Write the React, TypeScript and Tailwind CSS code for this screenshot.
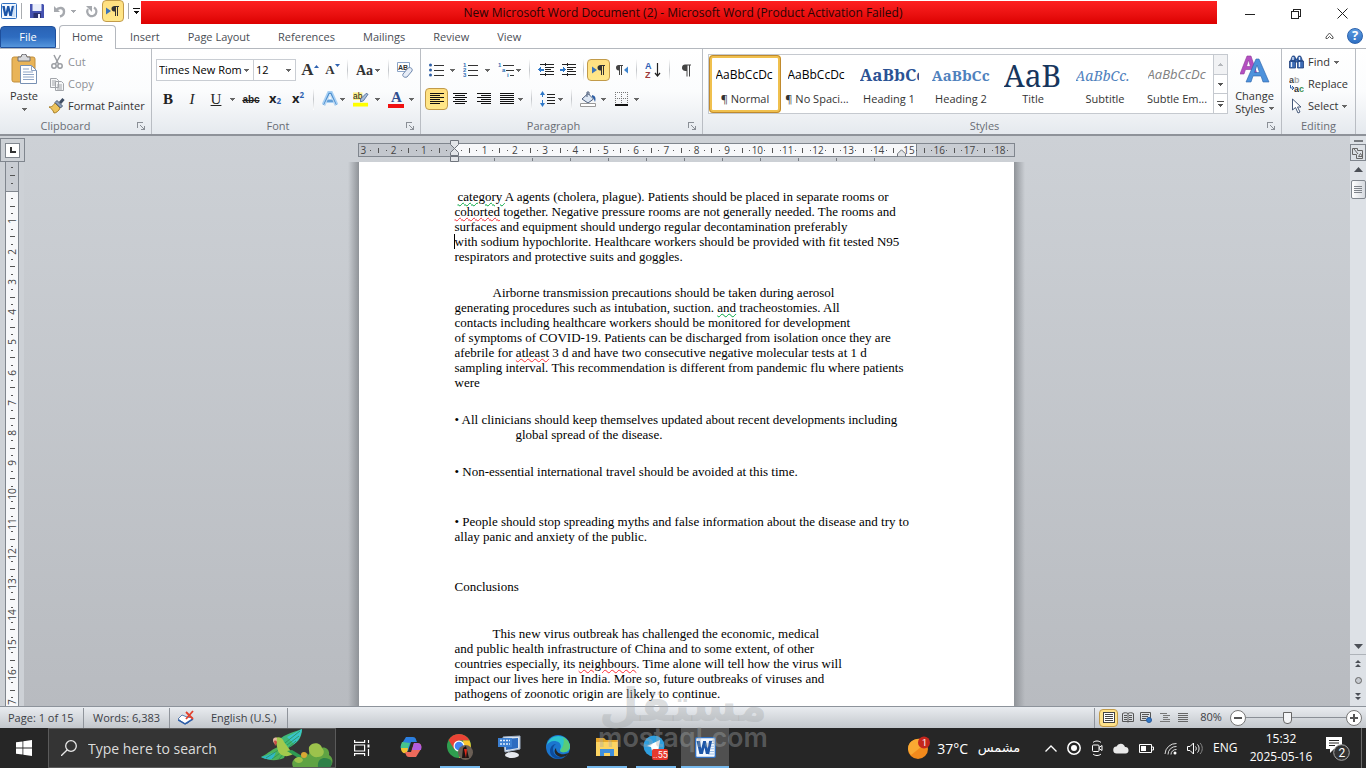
import React from 'react';

const Arrow = ({ className = 'text-[#666]' }: { className?: string }) => (
    <svg width="5" height="3" viewBox="0 0 5 3" shapeRendering="crispEdges" className={`shrink-0 ${className}`}>
        <path d="M0 0h5v1h-1v1h-1v1h-1v-1h-1v-1h-1z" fill="currentColor" />
    </svg>
);

const Sep = ({ className = '' }: { className?: string }) => (
    <span className={`h-[22px] w-px shrink-0 bg-gradient-to-b from-white via-[#c3c6ca] to-white ${className}`} />
);

interface ToolProps {
    label: string;
    className: string;
    active?: boolean;
    children: React.ReactNode;
}

const Tool: React.FC<ToolProps> = ({ label, className, active, children }) => (
    <button
        aria-label={label}
        className={`flex h-[22px] shrink-0 items-center justify-center rounded-sm ${className} ${active ? 'border border-[#c29b4a] bg-gradient-to-b from-[#ffdf80] to-[#ffe88a]' : ''}`}
    >
        {children}
    </button>
);

const Launcher = () => (
    <button aria-label="More options" className="flex w-5 items-center justify-center text-[#8a8f96]">
        <svg width="8" height="8" viewBox="0 0 8 8" fill="none" stroke="currentColor" shapeRendering="crispEdges">
            <path d="M.5 6V.5H6M3 3l4 4M7.5 3.5v4h-4" />
        </svg>
    </button>
);

interface GroupProps {
    title: string;
    className: string;
    launcher?: boolean;
    children: React.ReactNode;
}

const Group: React.FC<GroupProps> = ({ title, className, launcher = true, children }) => (
    <section className={`flex flex-col border-r border-[#b9bdc3] ${className}`}>
        <div className="flex-1">{children}</div>
        <div className="flex h-4 items-center text-[#696d75]">
            <span className="flex-1 text-center">{title}</span>
            {launcher && <Launcher />}
        </div>
    </section>
);

const WordLogo = ({ size }: { size: number }) => (
    <svg width={size} height={size} viewBox="0 0 16 16">
        <rect x=".5" y=".5" width="15" height="15" rx="1" fill="#f4f9ff" stroke="#2f6fc0" />
        <path d="M11 3h3.500M11.500 5h3M12 7h2.500M12 9h2.500M11 11h3.500M10 13h4.500" stroke="#9cc0ea" strokeWidth=".8" />
        <path d="M1.200 3h2.600l1 6 1.400-6h2.100l1.300 6 1.100-6h2.300l-2.200 10H8.300L7.200 8 6 13H3.400z" fill="#1d56a8" />
    </svg>
);

const LtrMark = () => (
    <svg width="14" height="12" viewBox="0 0 14 12">
        <path d="M0 2.500v7L5 6z" fill="#3c74b8" />
        <path d="M8.500 1H13v1h-1v9h-1V2h-1v9H9V6.500C6 6.500 5.500 4.500 5.500 3.700 5.500 2 6.800 1 8.500 1z" fill="#333" />
    </svg>
);

const RtlMark = () => (
    <svg width="14" height="12" viewBox="0 0 14 12">
        <path d="M13 2.500v7L9 6z" fill="#3c84cf" />
        <path d="M3.500 1H8v1H7v9H6V2H5v9H4V6.500C1.500 6.500 1 4.500 1 3.700 1 2 2 1 3.500 1z" fill="#444" />
    </svg>
);

const Lines = ({ d }: { d: string }) => (
    <svg width="16" height="14" viewBox="0 0 16 14" shapeRendering="crispEdges">
        <path d={d} stroke="#111" fill="none" />
    </svg>
);

const Undo = () => (
    <svg width="13" height="13" viewBox="0 0 13 13" fill="none" stroke="#a6a9ae" strokeWidth="2.400">
        <path d="M3 5.500C6 1.500 11 2.500 11 6.500c0 3-2 4.500-4 5" />
        <path d="M1 1v6h6z" fill="#a6a9ae" stroke="none" />
    </svg>
);

const Redo = () => (
    <svg width="13" height="13" viewBox="0 0 13 13" fill="none" stroke="#a6a9ae" strokeWidth="2.200">
        <path d="M9 2.500a4.600 4.600 0 1 1-6 1.500" />
        <path d="M1 1h6v6z" fill="#a6a9ae" stroke="none" />
    </svg>
);

const TitleBar = () => (
    <header className="flex h-[25px] shrink-0 items-start bg-white">
        <div className="flex h-[22px] w-[141px] shrink-0 items-center pl-px">
            <WordLogo size={16} />
            <span className="ml-1 h-4 w-px bg-[#a9acb0]" />
            <button aria-label="Save" className="ml-2">
                <svg width="14" height="14" viewBox="0 0 14 14">
                    <path d="M0 0h13l1 1v13H0z" fill="#4552b0" />
                    <path d="M2.500 0h9v7h-9z" fill="#e9eefa" />
                    <path d="M3.500 9h7.500v5H3.500z" fill="#2a3170" />
                    <path d="M8 10h2v4H8z" fill="#eef" />
                </svg>
            </button>
            <button aria-label="Undo" className="ml-[9px]"><Undo /></button>
            <Arrow className="ml-[5px] text-[#a6a9ae]" />
            <button aria-label="Redo" className="ml-[9px]"><Redo /></button>
            <Tool label="Left-to-right" className="ml-1 w-[22px]" active><LtrMark /></Tool>
            <span className="ml-1 h-4 w-px bg-[#a9acb0]" />
            <button aria-label="Customize Quick Access Toolbar" className="ml-1">
                <svg width="7" height="6" viewBox="0 0 7 6" shapeRendering="crispEdges">
                    <path d="M0 0h7v1H0zM0 3h7L3.500 6z" fill="#111" />
                </svg>
            </button>
        </div>
        <h1 className="mt-px mr-[10px] flex h-[23px] flex-1 items-center justify-center bg-gradient-to-b from-[#fe2020] to-[#dc0000] pl-2 text-[12px] whitespace-pre text-[#2a0505]">
            New Microsoft Word Document (2) - Microsoft Word (Product Activation Failed)
        </h1>
        <div className="flex h-[25px] w-[139px] items-center text-[#222]">
            <button aria-label="Minimize" className="flex w-[46px] justify-center">
                <svg width="10" height="10" stroke="currentColor" shapeRendering="crispEdges"><path d="M0 6.500h10" /></svg>
            </button>
            <button aria-label="Restore" className="flex w-[46px] justify-center pt-[2px]">
                <svg width="10" height="10" fill="none" stroke="currentColor" shapeRendering="crispEdges"><path d="M.5 2.500h7v7h-7zM2.500 2.500v-2h7v7h-2" /></svg>
            </button>
            <button aria-label="Close" className="flex w-[46px] justify-center pt-[2px]">
                <svg width="11" height="11" stroke="currentColor"><path d="M.5.5l10 10M10.500.5l-10 10" /></svg>
            </button>
        </div>
    </header>
);

const TABS = ['Insert', 'Page Layout', 'References', 'Mailings', 'Review', 'View'];

const Tabs = () => (
    <nav className="flex h-6 shrink-0 items-end border-b border-[#b4b8be] bg-white text-[11px] text-[#4a4e55]">
        <button className="h-[22px] w-14 rounded-t-sm border border-[#1e4f9c] bg-gradient-to-b from-[#2a63b5] via-[#2e6cc0] to-[#5596dc] text-white">File</button>
        <button className="relative -mb-px ml-[3px] h-6 w-[57px] rounded-t border border-b-0 border-[#b4b8be] bg-white">Home</button>
        <div className="flex h-[22px] flex-1 items-center">
            {TABS.map(tab => <button key={tab} className="px-[14px] whitespace-nowrap">{tab}</button>)}
        </div>
        <div className="flex h-6 items-center gap-[13px] pr-[3px]">
            <button aria-label="Minimize the Ribbon">
                <svg width="9" height="8" viewBox="0 0 9 8" fill="none" stroke="#555"><path d="M1 5L4.500 1l3.500 4v1.500H6.500L4.500 4.500l-2 2H1z" /></svg>
            </button>
            <button aria-label="Help" className="flex size-4 items-center justify-center rounded-full border border-[#2c62ad] bg-gradient-to-b from-[#5b9be0] to-[#2f70c4] text-[13px] font-bold text-white">?</button>
        </div>
    </nav>
);

const Clipboard = () => (
    <Group title="Clipboard" className="w-[152px] shrink-0">
        <div className="flex">
            <button className="flex w-12 flex-col items-center pt-[5px]">
                <svg width="28" height="30" viewBox="0 0 28 30">
                    <rect x="2" y="3" width="23" height="25" rx="2" fill="#e9b458" stroke="#c18f3d" />
                    <path d="M8 3h3a3 3 0 0 1 6 0h3v4H8z" fill="#d8d9dc" stroke="#6f6f73" />
                    <path d="M10.500 11.500h11l5 5v13h-16z" fill="#fff" stroke="#7790b3" />
                    <path d="M21.500 11.500v5h5M13 15h6M13 18h10M13 20.500h11M13 23h11M13 25.500h11" fill="none" stroke="#8fa5c6" />
                </svg>
                <span className="leading-6 text-[#333]">Paste</span>
                <Arrow />
            </button>
            <div className="flex flex-col pt-[2px] pl-px text-[#8d9096]">
                <button className="flex h-[22px] items-center gap-[3px]">
                    <svg width="16" height="16" viewBox="0 0 16 16" fill="none" stroke="#9a9da2" strokeWidth="1.500">
                        <path d="M5 1l4.500 9M11.500 1L6.500 10" /><circle cx="5" cy="12" r="2.200" /><circle cx="11" cy="12" r="2.200" />
                    </svg>
                    Cut
                </button>
                <button className="flex h-[22px] items-center gap-[3px]">
                    <svg width="16" height="16" viewBox="0 0 16 16" fill="#f6f7f8" stroke="#a2a5aa">
                        <path d="M1.500 2.500h6l2 2v7h-8zM6.500 5.500h6l2 2v7h-8z" /><path d="M8 9h5M8 11h5M8 13h5M3 5h4M3 7h3M3 9h3" />
                    </svg>
                    Copy
                </button>
                <button className="flex h-[22px] items-center gap-[3px] whitespace-nowrap text-[#333]">
                    <svg width="16" height="16" viewBox="0 0 16 16">
                        <path d="M0 9c4 0 5-3 6-4l5 5c-1 3-4 5-6 5-1-3-3-5-5-6z" fill="#ecc35c" stroke="#a97f28" />
                        <path d="M6 4.500l5.500 5.500 2-2-5.500-5.500z" fill="#8ba0bd" stroke="#46566f" />
                        <path d="M11 5l3.500-4" stroke="#3f4d63" strokeWidth="3" />
                    </svg>
                    Format Painter
                </button>
            </div>
        </div>
    </Group>
);

const Combo = ({ label, value, className }: { label: string; value: string; className: string }) => (
    <span className={`flex h-[22px] items-center border border-[#c9cdd3] bg-white ${className}`}>
        <select aria-label={label} className="min-w-0 flex-1 appearance-none pl-[2px] text-[11px] whitespace-nowrap text-black">
            <option>{value}</option>
        </select>
        <Arrow className="mr-1 text-[#666]" />
    </span>
);

const FontGroup = () => (
    <Group title="Font" className="w-[269px] shrink-0 pl-1">
        <div className="flex items-center pt-[10px]">
            <Combo label="Font" value="Times New Rom" className="w-[98px]" />
            <Combo label="Font size" value="12" className="-ml-px w-[43px]" />
            <Tool label="Grow font" className="ml-[2px] w-6 font-['Liberation_Serif',serif] text-[17px] font-bold text-[#333]">
                A<svg width="5" height="10"><path d="M0 3h5L2.500 0z" fill="#2f62b0" /></svg>
            </Tool>
            <Tool label="Shrink font" className="w-[21px] font-['Liberation_Serif',serif] text-[13px] font-bold text-[#333]">
                A<svg width="5" height="12"><path d="M0 0h5L2.500 3z" fill="#2f62b0" /></svg>
            </Tool>
            <Sep className="ml-1" />
            <Tool label="Change case" className="ml-2 w-6 gap-[2px] font-['Liberation_Serif',serif] text-[14px] font-bold text-[#333]">Aa<Arrow /></Tool>
            <Sep className="ml-2" />
            <Tool label="Clear formatting" className="ml-1 w-6">
                <svg width="16" height="16" viewBox="0 0 16 16">
                    <path d="M.5.5h12v9H.5z" fill="#fff" stroke="#8ba4c7" />
                    <text x="1" y="8" fontSize="7" fontWeight="bold" fontFamily="Liberation Sans" fill="#333">AB</text>
                    <path d="M6 12l5-6c2-1 5 0 4 3l-5 6c-3 1-5-1-4-3z" fill="#e7edf7" stroke="#6d87ad" />
                </svg>
            </Tool>
        </div>
        <div className="flex items-center pt-[7px] font-['Liberation_Serif',serif] text-[15px] text-[#222]">
            <Tool label="Bold" className="w-6 font-bold">B</Tool>
            <Tool label="Italic" className="w-6 italic">I</Tool>
            <Tool label="Underline" className="w-6 underline">U</Tool>
            <Arrow className="ml-[2px] text-[#666]" />
            <Tool label="Strikethrough" className="ml-1 w-6 font-['Liberation_Sans',sans-serif] text-[10px] font-bold line-through">abc</Tool>
            <Tool label="Subscript" className="w-6 font-['Open_Sans',sans-serif] text-[13px] font-bold">x<sub className="text-[8px] text-[#2f62b0]">2</sub></Tool>
            <Tool label="Superscript" className="w-[22px] font-['Open_Sans',sans-serif] text-[13px] font-bold">x<sup className="text-[8px] text-[#2f62b0]">2</sup></Tool>
            <Sep className="ml-1" />
            <Tool label="Text effects" className="ml-2 w-4">
                <svg width="16" height="16" viewBox="0 0 16 16" fill="none">
                    <path d="M1.500 14L7 2h2l5.500 12M4 10h8" stroke="#a9d0f3" strokeWidth="4" /><path d="M2 14L7.200 2.500h1.600L14 14M4.500 10h7" stroke="#4b8fd0" strokeWidth="1.600" /><path d="M2.500 14L8 3l5.500 11" stroke="#fff" strokeWidth=".7" />
                </svg>
            </Tool>
            <Arrow className="ml-[2px] text-[#666]" />
            <Tool label="Highlight" className="ml-2 w-4">
                <svg width="17" height="16" viewBox="0 0 17 16">
                    <path d="M0 1h10v8H0z" fill="#fdf18a" /><text x="0" y="8" fontSize="9" fontFamily="Liberation Sans" fill="#222">ab</text>
                    <path d="M8 8l6-6 2 1-5 7-3 1z" fill="#a9bdd8" stroke="#3e5f92" strokeWidth=".8" />
                    <path d="M0 12h16v4H0z" fill="#ffff00" />
                </svg>
            </Tool>
            <Arrow className="ml-[6px] text-[#666]" />
            <Tool label="Font color" className="ml-2 w-4">
                <svg width="16" height="17" viewBox="0 0 16 17">
                    <text x="3" y="11" fontSize="15" fontWeight="bold" fontFamily="Liberation Serif" fill="#2f4f8f">A</text>
                    <path d="M0 13h16v4H0z" fill="#f01010" />
                </svg>
            </Tool>
            <Arrow className="ml-[5px] text-[#666]" />
        </div>
    </Group>
);

const IndentIcon = ({ arrow }: { arrow: string }) => (
    <svg width="16" height="14" viewBox="0 0 16 14" shapeRendering="crispEdges">
        <path d="M2 1.500h14M7 4.500h9M7 6.500h6M7 8.500h9M2 11.500h14" stroke="#222" />
        <path d="M7.500 0v14" stroke="#222" strokeDasharray="1 1" />
        <path d={arrow} fill="#2f78c8" />
    </svg>
);

const ParagraphGroup = () => (
    <Group title="Paragraph" className="w-[282px] shrink-0 pl-1">
        <div className="flex items-center pt-[10px]">
            <Tool label="Bullets" className="ml-1 w-4">
                <svg width="16" height="14" viewBox="0 0 16 14">
                    <path d="M5 2.500h10M5 7.500h10M5 12.500h10" stroke="#333" shapeRendering="crispEdges" />
                    <g fill="#2e5fa5"><circle cx="1.500" cy="2" r="1.500" /><circle cx="1.500" cy="7" r="1.500" /><circle cx="1.500" cy="12" r="1.500" /></g>
                </svg>
            </Tool>
            <Arrow className="ml-[5px] text-[#666]" />
            <Tool label="Numbering" className="ml-2 w-4">
                <svg width="16" height="15" viewBox="0 0 16 15">
                    <path d="M5 2.500h10M5 7.500h10M5 12.500h10" stroke="#333" shapeRendering="crispEdges" />
                    <g fill="#2e6fb5" fontSize="6" fontWeight="bold" fontFamily="Liberation Sans"><text x="0" y="4">1</text><text x="0" y="9">2</text><text x="0" y="14">3</text></g>
                </svg>
            </Tool>
            <Arrow className="ml-[6px] text-[#666]" />
            <Tool label="Multilevel list" className="ml-2 w-4">
                <svg width="16" height="15" viewBox="0 0 16 15">
                    <path d="M5 2.500h11M8 7.500h8M12 12.500h4" stroke="#333" shapeRendering="crispEdges" />
                    <g fill="#2e6fb5" fontSize="6" fontWeight="bold" fontFamily="Liberation Sans"><text x="0" y="4">1</text><text x="4" y="9">a</text><text x="9" y="14">i</text></g>
                </svg>
            </Tool>
            <Arrow className="ml-[2px] text-[#666]" />
            <Sep className="ml-2" />
            <Tool label="Decrease indent" className="ml-2 w-4"><IndentIcon arrow="M0 6.500L3 3.500V5.500H6V7.500H3V9.500z" /></Tool>
            <Tool label="Increase indent" className="ml-[6px] w-4"><IndentIcon arrow="M6 6.500L3 3.500V5.500H0V7.500H3V9.500z" /></Tool>
            <Sep className="ml-[7px]" />
            <Tool label="Left-to-right" className="ml-[3px] w-[23px]" active><LtrMark /></Tool>
            <Tool label="Right-to-left" className="w-[23px]"><RtlMark /></Tool>
            <Sep className="ml-[3px]" />
            <Tool label="Sort" className="ml-2 w-4">
                <svg width="16" height="17" viewBox="0 0 16 17">
                    <text x="0" y="7" fontSize="9" fontWeight="bold" fontFamily="Liberation Sans" fill="#2e5fb5">A</text>
                    <text x="0" y="16" fontSize="9" fontWeight="bold" fontFamily="Liberation Sans" fill="#9c3a3a">Z</text>
                    <path d="M12.500 1v13M10 11l2.500 3 2.500-3" fill="none" stroke="#222" strokeWidth="1.200" />
                </svg>
            </Tool>
            <Sep className="ml-2" />
            <Tool label="Show paragraph marks" className="ml-1 w-6">
                <svg width="12" height="13" viewBox="0 0 12 13"><path d="M5 .5h6v1h-1v11H9v-11H7.500v11h-1V7C3 7 2 5.500 2 3.700 2 1.500 3.500.5 5 .5z" fill="#444" /></svg>
            </Tool>
        </div>
        <div className="flex items-center pt-[7px]">
            <Tool label="Align left" className="w-[23px]" active><Lines d="M1 1.500h14M1 3.500h10M1 5.500h14M1 7.500h10M1 9.500h14M1 11.500h10" /></Tool>
            <Tool label="Center" className="w-6"><Lines d="M1 1.500h14M3 3.500h10M1 5.500h14M3 7.500h10M1 9.500h14M3 11.500h10" /></Tool>
            <Tool label="Align right" className="w-6"><Lines d="M1 1.500h14M5 3.500h10M1 5.500h14M5 7.500h10M1 9.500h14M5 11.500h10" /></Tool>
            <Tool label="Justify" className="w-[22px]"><Lines d="M1 1.500h14M1 3.500h14M1 5.500h14M1 7.500h14M1 9.500h14M1 11.500h14" /></Tool>
            <Arrow className="text-[#666]" />
            <Sep className="ml-2" />
            <Tool label="Line spacing" className="ml-2 w-4">
                <svg width="16" height="16" viewBox="0 0 16 16">
                    <path d="M2.500 1v5M2.500 9v6" stroke="#2f78c8" /><path d="M0 4l2.500-4L5 4zM0 12l2.500 4L5 12z" fill="#2f78c8" />
                    <path d="M7 3.500h8M7 6.500h8M7 9.500h8M7 12.500h8" stroke="#222" shapeRendering="crispEdges" />
                </svg>
            </Tool>
            <Arrow className="ml-[2px] text-[#666]" />
            <Sep className="ml-2" />
            <Tool label="Shading" className="ml-2 w-[17px]">
                <svg width="17" height="16" viewBox="0 0 17 16">
                    <path d="M2 8l6-5.500L13.500 8 8 12z" fill="#dde7f4" stroke="#4d5f7d" /><path d="M7 6V1h2v3" fill="none" stroke="#4d5f7d" />
                    <path d="M12 4c4 1 4 4 3 7-1-2-1-4-3-5z" fill="#2e5fa5" /><path d="M.5 12.500h15v3H.5z" fill="#fff" stroke="#999" />
                </svg>
            </Tool>
            <Arrow className="ml-1 text-[#666]" />
            <Tool label="Borders" className="ml-2 w-4">
                <svg width="14" height="14" viewBox="0 0 14 14" shapeRendering="crispEdges">
                    <path d="M.5 0v12M6.500 0v12M12.500 0v12M0 .5h13M0 6.500h13" stroke="#777" strokeDasharray="1 1" /><path d="M0 13h13" stroke="#111" strokeWidth="2" />
                </svg>
            </Tool>
            <Arrow className="ml-1 text-[#666]" />
        </div>
    </Group>
);

const STYLES = [
    { name: '¶ Normal', sample: 'AaBbCcDc', look: "font-['Open_Sans',sans-serif] text-[12px] text-black" },
    { name: '¶ No Spaci...', sample: 'AaBbCcDc', look: "font-['Open_Sans',sans-serif] text-[12px] text-black" },
    { name: 'Heading 1', sample: 'AaBbCc', look: "font-['Noto_Serif','DejaVu_Serif',serif] text-[17px] font-bold text-[#2b5294]" },
    { name: 'Heading 2', sample: 'AaBbCc', look: "font-['Noto_Serif','DejaVu_Serif',serif] text-[15px] font-bold text-[#4f81bd]" },
    { name: 'Title', sample: 'AaB', look: "font-['Noto_Serif','DejaVu_Serif',serif] text-[30px] text-[#17365d]" },
    { name: 'Subtitle', sample: 'AaBbCc.', look: "font-['Noto_Serif','DejaVu_Serif',serif] text-[14px] italic text-[#4f81bd]" },
    { name: 'Subtle Em...', sample: 'AaBbCcDc', look: "font-['Open_Sans',sans-serif] text-[13px] italic text-[#808080]" },
];

const StylesGroup = () => (
    <Group title="Styles" className="min-w-0 flex-1 pl-[5px]">
        <div className="flex pt-[5px]">
            <div className="flex h-[60px] border border-[#c5c9cf] bg-white">
                {STYLES.map((style, i) => (
                    <button
                        key={style.name}
                        className={`flex w-[72px] flex-col items-center overflow-hidden rounded-sm ${i === 0 ? 'border-[3px] border-[#f0c04e] outline outline-1 -outline-offset-1 outline-[#c08a2e]' : 'border-[3px] border-transparent'}`}
                    >
                        <span className={`flex h-[34px] w-[59px] items-center overflow-hidden whitespace-nowrap ${style.look}`}>{style.sample}</span>
                        <span className="leading-[14px] whitespace-nowrap text-[#333]">{style.name}</span>
                    </button>
                ))}
                <div className="flex w-[14px] flex-col border-l border-[#c5c9cf]">
                    <button aria-label="Previous styles" className="flex flex-1 items-center justify-center bg-[#f1f2f4]"><Arrow className="rotate-180 text-[#b5b8bc]" /></button>
                    <button aria-label="Next styles" className="flex flex-1 items-center justify-center border-y border-[#c5c9cf]"><Arrow className="text-[#555]" /></button>
                    <button aria-label="All styles" className="flex flex-1 flex-col items-center justify-center gap-[2px]"><span className="h-px w-[7px] bg-[#555]" /><Arrow className="text-[#555]" /></button>
                </div>
            </div>
            <button className="flex flex-1 flex-col items-center pt-px whitespace-nowrap text-[#333]">
                <svg width="30" height="29" viewBox="0 0 30 29">
                    <path d="M0 19L7 1h4l6 18h-4l-1.500-4.500h-6L4 19zM6.500 11.500h4L8.500 5z" fill="#b44fc0" stroke="#8e3a9c" strokeWidth=".6" />
                    <path d="M6 27L16 4h3l10 23h-6l-2-6h-8l-2 6zM14.500 17.500h5L17 10z" fill="#4d92dc" stroke="#2b62a8" strokeWidth=".6" />
                </svg>
                <span className="mt-[5px] leading-[13px]">Change</span>
                <span className="flex items-center gap-1 leading-[13px]">Styles <Arrow /></span>
            </button>
        </div>
    </Group>
);

const EditingGroup = () => (
    <Group title="Editing" className="w-[74px] shrink-0" launcher={false}>
        <div className="flex flex-col pt-[2px] pl-[7px] text-[#333]">
            <button className="flex h-[22px] items-center gap-1">
                <svg width="15" height="14" viewBox="0 0 15 14" fill="#3d6cb5" stroke="#1f3f78" strokeWidth=".8">
                    <path d="M2.500 3l1-2h2l1 2v3h-5zM8.500 3l1-2h2l1 2 1 3h-5zM.5 6h6v7h-6zM8.500 6h6v7h-6z" /><path d="M6 4h3v3H6z" /><path d="M2.500 7v5M10.500 7v5M4 2v3M10.500 2v3" stroke="#e5edfa" strokeWidth="1.300" />
                </svg>
                Find <Arrow />
            </button>
            <button className="flex h-[22px] items-center gap-1">
                <svg width="15" height="15" viewBox="0 0 15 15" fontFamily="Liberation Sans" fontWeight="bold" fontSize="9">
                    <text x="0" y="6" fill="#444">a<tspan fill="#aaa">b</tspan></text><text x="5" y="15" fill="#333">a<tspan fill="#3c9150">c</tspan></text>
                    <path d="M1.500 8v3h3M3 9l2 2-2 2" fill="none" stroke="#2e5fa5" />
                </svg>
                Replace
            </button>
            <button className="flex h-[22px] items-center gap-1">
                <svg width="15" height="16" viewBox="0 0 15 16"><path d="M3.500 1v11l3-2.500L9 15l2-1-2.500-5H12z" fill="#fff" stroke="#46597a" /></svg>
                Select <Arrow />
            </button>
        </div>
    </Group>
);

const mark = (i: number) => (i % 4 === 0 ? String(i / 4) : i % 2 === 0 ? 'tick' : 'dot');

const HorizontalRuler = () => (
    <div className="flex h-[26px] shrink-0 flex-col pt-[7px]">
        <div className="relative flex h-[14px] w-[657px] items-center border border-[#80868e] bg-[linear-gradient(90deg,#c3c7cd_95px,#f7f8fa_95px,#f7f8fa_557px,#80868e_557px,#80868e_558px,#c9cdd3_558px)] pr-[2px] pl-px text-[10px] text-[#444]">
            {Array.from({ length: 86 }, (_, n) => {
                const m = mark(Math.abs(n - 12));
                return (
                    <span key={n} className="flex w-0 flex-1 items-center justify-center">
                        {m === 'tick' && <i className="h-[5px] w-px shrink-0 bg-[#555]" />}
                        {m === 'dot' && <i className="size-px shrink-0 bg-[#555]" />}
                        {m !== 'tick' && m !== 'dot' && m !== '0' && <span>{m}</span>}
                    </span>
                );
            })}
            <svg width="9" height="22" viewBox="0 0 9 22" className="absolute -top-[4px] left-[91px]" fill="#e3e5e8" stroke="#70757d">
                <path d="M.5.5h8v4l-4 4-4-4zM4.500 8.500l4 4v3h-8v-3zM.5 16.500h8v5h-8z" />
            </svg>
            <svg width="9" height="8" viewBox="0 0 9 8" className="absolute top-[5px] left-[538px]" fill="#e3e5e8" stroke="#70757d">
                <path d="M4.500.8l4 4v3h-8v-3z" />
            </svg>
        </div>
        <div className="mt-px flex gap-[37px] pl-[136px]">
            {Array.from({ length: 11 }, (_, n) => <i key={n} className="h-[3px] w-px bg-[#777c83]" />)}
        </div>
    </div>
);

const VMark = ({ m }: { m: string }) => (
    <span className="flex h-0 flex-1 items-center justify-center">
        {m === 'tick' && <i className="h-px w-[5px] bg-[#555]" />}
        {m === 'dot' && <i className="h-px w-[2px] bg-[#555]" />}
        {m !== 'tick' && m !== 'dot' && <span className="-rotate-90">{m}</span>}
    </span>
);

const VerticalRuler = () => (
    <div className="flex w-6 shrink-0 flex-col bg-[#cdd1d6] pt-[2px]">
        <button aria-label="Tab selector" className="flex h-6 w-[25px] shrink-0 items-center justify-center border border-[#80868e]">
            <span className="flex size-[15px] items-center justify-center border border-[#80868e] bg-white">
                <i className="size-[6px] border-b-2 border-l-2 border-[#333]" />
            </span>
        </button>
        <div className="ml-[5px] flex min-h-0 w-[14px] flex-1 flex-col border-x border-[#80868e] text-[10px] leading-none text-[#444]">
            <div className="flex h-[29px] shrink-0 flex-col bg-[#c9cdd3] pt-[2px] pb-1">
                {['dot', 'tick', 'dot'].map((m, i) => <VMark key={i} m={m} />)}
            </div>
            <div className="h-0 flex-1 overflow-hidden border-t border-[#80868e] bg-[#f7f8fa] pt-[3px]">
                {[0, 1, 2, 3, 4].map(block => (
                    <div key={block} className="flex h-[121px] flex-col">
                        {Array.from({ length: 16 }, (_, n) => <VMark key={n} m={mark(block * 16 + n + 1)} />)}
                    </div>
                ))}
            </div>
        </div>
    </div>
);

const Typo = ({ children, grammar }: { children: React.ReactNode; grammar?: boolean }) => (
    <span className={`underline decoration-wavy decoration-1 underline-offset-1 ${grammar ? 'decoration-green-600' : 'decoration-red-500'}`}>{children}</span>
);

const Page = () => (
    <article className="h-0 w-[655px] flex-1 overflow-hidden bg-white pt-[27px] pl-[96px] font-['Liberation_Serif',serif] text-[13px] leading-[15px] whitespace-nowrap text-black">
        <p>
            <span className="pl-[3px]"><Typo grammar>category </Typo>A agents (cholera, plague). Patients should be placed in separate rooms or</span><br />
            <Typo>cohorted</Typo> together. Negative pressure rooms are not generally needed. The rooms and<br />
            surfaces and equipment should undergo regular decontamination preferably<br />
            <span className="-ml-px border-l border-black">with sodium hypochlorite. Healthcare workers should be provided with fit tested N95</span><br />
            respirators and protective suits and goggles.
        </p>
        <p className="mt-[21px] indent-[38px]">
            Airborne transmission precautions should be taken during aerosol<br />
            generating procedures such as intubation, suction. <Typo grammar>and</Typo> tracheostomies. All<br />
            contacts including healthcare workers should be monitored for development<br />
            of symptoms of COVID-19. Patients can be discharged from isolation once they are<br />
            afebrile for <Typo>atleast</Typo> 3 d and have two consecutive negative molecular tests at 1 d<br />
            sampling interval. This recommendation is different from pandemic flu where patients<br />
            were
        </p>
        <p className="mt-[22px]">
            • All clinicians should keep themselves updated about recent developments including<br />
            <span className="pl-[61px]">global spread of the disease.</span>
        </p>
        <p className="mt-[22px]">• Non-essential international travel should be avoided at this time.</p>
        <p className="mt-[35px]">
            • People should stop spreading myths and false information about the disease and try to<br />
            allay panic and anxiety of the public.
        </p>
        <h2 className="mt-[35px]">Conclusions</h2>
        <p className="mt-[32px] indent-[38px]">
            This new virus outbreak has challenged the economic, medical<br />
            and public health infrastructure of China and to some extent, of other<br />
            countries especially, its <Typo>neighbours</Typo>. Time alone will tell how the virus will<br />
            impact our lives here in India. More so, future outbreaks of viruses and<br />
            pathogens of zoonotic origin are likely to continue.
        </p>
    </article>
);

const ScrollBar = () => (
    <div className="flex w-4 shrink-0 flex-col items-center bg-[#dde1e6] pt-[4px] text-[#4c5057]">
        <i className="h-[2px] w-[9px] shrink-0 bg-[#777b80]" />
        <button aria-label="View ruler" className="mt-[2px] flex h-[17px] w-4 shrink-0 items-center justify-center border border-[#80868e]">
            <svg width="12" height="12" viewBox="0 0 12 12" fill="none" stroke="#666"><path d="M.5 1.500h5v2h5v8h-6v-4h-4zM2 2l4 5M6.500 9.500l2-3 2 3z" /></svg>
        </button>
        <button aria-label="Scroll up" className="mt-[6px] shrink-0"><svg width="9" height="6"><path d="M0 5h9L4.500 0z" fill="currentColor" /></svg></button>
        <button aria-label="Scroll thumb" className="mt-[7px] flex h-[19px] w-[15px] shrink-0 flex-col items-center justify-center gap-px rounded-xs border border-[#80868e] bg-gradient-to-r from-white to-[#d5d9df]">
            {[0, 1, 2, 3].map(n => <i key={n} className="h-px w-2 bg-[#7e838a]" />)}
        </button>
        <div className="flex-1" />
        <button aria-label="Scroll down"><svg width="9" height="5"><path d="M0 0h9L4.500 5z" fill="currentColor" /></svg></button>
        <div className="mt-[5px] flex h-[52px] w-full shrink-0 flex-col items-center justify-around border-t border-[#aeb3b9]">
            <button aria-label="Previous page"><svg width="6" height="8"><path d="M0 3h6L3 0zM0 7h6L3 4z" fill="currentColor" /></svg></button>
            <button aria-label="Browse object" className="size-[7px] rounded-full border border-[#666] bg-[#c6cad0]" />
            <button aria-label="Next page"><svg width="6" height="8"><path d="M0 0h6L3 3zM0 4h6L3 7z" fill="currentColor" /></svg></button>
        </div>
    </div>
);

const StatusBar = () => (
    <footer className="flex h-[22px] shrink-0 items-center border-t border-[#8d939b] bg-gradient-to-b from-[#e9ecf0] to-[#c3c7cc] text-[11px] whitespace-nowrap text-[#3c4046]">
        <button className="w-[84px] border-r border-[#8f949b] pl-2 text-left leading-5">Page: 1 of 15</button>
        <button className="w-[86px] border-r border-[#8f949b] pl-[9px] text-left leading-5">Words: 6,383</button>
        <button aria-label="Proofing errors" className="ml-2">
            <svg width="17" height="15" viewBox="0 0 17 15">
                <path d="M0 9l4-4 5 2 6 1-5 5-3 1z" fill="#fff" stroke="#5b7db0" /><path d="M0 10l7 4 8-5" fill="none" stroke="#2d5ea8" strokeWidth="1.500" />
                <path d="M8 2l7 7M15 1L8 9" stroke="#e3402c" strokeWidth="1.800" />
            </svg>
        </button>
        <button className="ml-4 w-[77px] border-r border-[#8f949b] text-left leading-5">English (U.S.)</button>
        <div className="flex flex-1 items-center justify-end">
            <span className="h-5 w-px bg-[#8f949b]" />
            <button aria-label="Print layout" className="ml-1 flex h-[18px] w-[19px] items-center justify-center rounded-sm border border-[#c29b4a] bg-[#ffe28a]">
                <svg width="12" height="11" viewBox="0 0 12 11" fill="#fff" stroke="#444" shapeRendering="crispEdges"><path d="M.5.5h11v10H.5zM2 2.500h8M2 4.500h8M2 6.500h8M2 8.500h8" /></svg>
            </button>
            <button aria-label="Full screen reading" className="ml-1">
                <svg width="12" height="11" viewBox="0 0 12 11" fill="none" stroke="#555"><path d="M.5 1.500c2-1 4-1 5.500 0 1.500-1 3.500-1 5.500 0v8H.5zM6 1.500v9M2 3.500h3M2 5.500h3M2 7.500h3M7 3.500h3M7 5.500h3M7 7.500h3" /></svg>
            </button>
            <button aria-label="Web layout" className="ml-[6px]">
                <svg width="12" height="11" viewBox="0 0 12 11" fill="none" stroke="#555"><path d="M.5.5h10v8H.5zM2 2.500h7M2 4.500h6M2 6.500h4" /><circle cx="9" cy="8" r="2.500" fill="#2f78c8" stroke="#2c5a9a" /></svg>
            </button>
            <button aria-label="Outline" className="ml-2">
                <svg width="10" height="9" stroke="#777" shapeRendering="crispEdges"><path d="M0 .5h7M3 2.500h7M3 4.500h5M3 6.500h7M0 8.500h10" /></svg>
            </button>
            <button aria-label="Draft" className="ml-2">
                <svg width="10" height="9" stroke="#666" shapeRendering="crispEdges"><path d="M0 .5h10M0 2.500h10M0 4.500h10M0 6.500h10M0 8.500h10" /></svg>
            </button>
            <button className="ml-3 w-[22px]">80%</button>
            <button aria-label="Zoom out" className="ml-2 flex size-4 items-center justify-center rounded-full border border-[#777] bg-white"><i className="h-[2px] w-2 bg-[#555]" /></button>
            <input
                aria-label="Zoom"
                type="range"
                min="0"
                max="100"
                defaultValue="41"
                className="h-3 w-[100px] appearance-none bg-[linear-gradient(#8a8f96,#8a8f96)] bg-[length:100%_1px] bg-center bg-no-repeat [&::-webkit-slider-thumb]:h-3 [&::-webkit-slider-thumb]:w-[9px] [&::-webkit-slider-thumb]:appearance-none [&::-webkit-slider-thumb]:rounded-b-[4px] [&::-webkit-slider-thumb]:border [&::-webkit-slider-thumb]:border-[#666] [&::-webkit-slider-thumb]:bg-[#f4f5f7]"
            />
            <button aria-label="Zoom in" className="mr-1 flex size-4 items-center justify-center rounded-full border border-[#777] bg-white">
                <svg width="8" height="8" stroke="#555" strokeWidth="2"><path d="M0 4h8M4 0v8" /></svg>
            </button>
        </div>
    </footer>
);

const Parrot = () => (
    <svg width="74" height="38" viewBox="0 0 74 38">
        <path d="M15 14C21 6 30 4 41 0c0 9-5 15-14 19z" fill="#3fb878" />
        <path d="M26 8l15-8c-1 8-4 12-8 15z" fill="#39c3c9" />
        <path d="M24 14l15-12M26 16l12-9M28 18l7-6" stroke="#2c8f52" strokeWidth=".8" />
        <path d="M18 18C12 19 8 24 0 28c8 4 16 4 23 1l4-10z" fill="#4db35a" />
        <path d="M0 28c6-1 10-4 15-5l-3 7c-4 1-8 0-12-2z" fill="#2fb7c4" />
        <path d="M19 20L5 29M22 22l-11 8M24 23l-6 7" stroke="#2c8f52" strokeWidth=".8" />
        <path d="M14 9c4-2 8 0 9 4l9 12c-6 4-13 2-15-3z" fill="#a3c94d" />
        <path d="M12 11c0-2 2-3 4-2l-1 6c-2 0-3-2-3-4z" fill="#e6b7a0" />
        <path d="M13 12c2-1 3 0 3 2l-2 3z" fill="#c94d44" />
        <path d="M26 22l16 10 4-2-15-9z" fill="#2f9b52" />
        <path d="M32 38c-3-6 3-11 8-9 0-5 6-6 8-3 0-8 7-11 11-7 6-2 10 2 9 7 5 3 4 9 1 12z" fill="#5fa343" />
        <path d="M48 18c4-6 12-4 13 1 4 4 1 9-4 9-6 1-10-4-9-10zM33 31c2-4 8-4 9 0-1 4-7 4-9 0z" fill="#9cc24c" />
        <path d="M57 38c-1-7 4-11 11-8 4 2 3 6 1 8z" fill="#2f8148" />
        <circle cx="43" cy="26" r="3" fill="#d9a834" />
    </svg>
);

const APPS = [
    {
        name: 'Copilot', running: '', icon: (
            <svg width="22" height="22" viewBox="0 0 22 22">
                <path d="M6 1h7c3 0 3 3 4 5h-6L8 15H5C1 15 0 12 1 9z" fill="#2b7fe0" /><path d="M1 9l1-3 8 1-3 8c-4 1-7-1-6-6z" fill="#46c58c" /><path d="M1 12h7l-1 5c-4 1-6-1-6-5z" fill="#f2c331" />
                <path d="M16 21H9c-3 0-3-3-4-5h6l3-9h3c4 0 5 3 4 6z" fill="#ee6a5b" /><path d="M14 7h3c4 0 5 3 4 7h-9z" fill="#b05ce0" />
            </svg>
        ),
    },
    {
        name: 'Chrome', running: 'w-10', icon: (
            <svg width="26" height="26" viewBox="0 0 26 26">
                <circle cx="12" cy="12" r="12" fill="#2f9e4f" /><path d="M12 0a12 12 0 0 1 10.500 6.500H12L7 15 1.600 6A12 12 0 0 1 12 0z" fill="#ea4335" /><path d="M22.500 6.500A12 12 0 0 1 12 24l5-9-1-8.500z" fill="#fbc52d" />
                <circle cx="12" cy="12" r="5.500" fill="#fff" /><circle cx="12" cy="12" r="4.300" fill="#4285f4" />
                <circle cx="18.500" cy="18.500" r="7.500" fill="#6b5f55" /><path d="M15 24l1-10 3-2 3 12z" fill="#1c1414" /><path d="M17 15l3 0-1 9z" fill="#e02a1b" />
            </svg>
        ),
    },
    {
        name: 'Remote Desktop', running: '', icon: (
            <svg width="24" height="24" viewBox="0 0 24 24">
                <path d="M6 2l17-1v13l-15 3z" fill="#dfe6ef" stroke="#9fb0c6" /><path d="M8 4l13-1v10L9 15z" fill="#2d6cc0" /><ellipse cx="15" cy="20" rx="7" ry="3" fill="#e6e9ee" />
                <path d="M1 3h14v9H1z" fill="#3b7fd1" /><path d="M3 5.500h10M3 9h10" stroke="#e4effb" strokeWidth="1.500" strokeDasharray="2 1" />
            </svg>
        ),
    },
    {
        name: 'Edge', running: '', icon: (
            <svg width="24" height="24" viewBox="0 0 24 24">
                <circle cx="12" cy="12" r="12" fill="#1b76cf" /><path d="M1 10C3-1 20-3 24 10c1 5-3 8-8 7-3-1-2-3-1-5 0-4-3-6-7-6-3 0-6 2-7 4z" fill="#2cc3d0" /><path d="M17 2c6 3 8 9 6 12-2 4-7 4-9 2 3-3 5-9 3-14z" fill="#59cc78" />
                <path d="M7 14c0 6 5 9 11 8-5 4-14 1-14-6 0-4 3-7 6-7-2 1-3 3-3 5z" fill="#0d4c9c" /><path d="M10 13c0 5 5 7 9 6l4-1c-2 3-5 4-8 4-6-1-8-6-5-9z" fill="#262626" />
            </svg>
        ),
    },
    {
        name: 'File Explorer', running: 'w-10', icon: (
            <svg width="22" height="20" viewBox="0 0 22 20">
                <path d="M0 1h8l2 2h12v15H0z" fill="#e8a92c" /><path d="M0 5h22v14H0z" fill="#fcd462" /><path d="M4 19v-7h14v7h-4v-3H8v3z" fill="#3f8fdc" />
            </svg>
        ),
    },
    {
        name: 'Telegram', running: 'w-10', icon: (
            <svg width="26" height="26" viewBox="0 0 26 26">
                <circle cx="11" cy="12" r="10.500" fill="#2f9fdf" /><path d="M4 12l13-6-2 12-4-3-2 2-1-4z" fill="#fff" />
                <rect x="9" y="15" width="16" height="11" rx="2" fill="#e8392e" /><text x="10" y="24" fontSize="9" fontFamily="Roboto" fill="#fff">..55</text>
            </svg>
        ),
    },
    { name: 'Word', running: 'w-12', icon: <WordLogo size={21} /> },
];

const TaskBar = () => (
    <footer className="flex h-10 shrink-0 items-stretch bg-[#262626] whitespace-nowrap text-white">
        <button aria-label="Start" className="flex w-12 items-center justify-center">
            <svg width="16" height="16" viewBox="0 0 16 16" fill="#fff"><path d="M0 2.300l6.500-.9v6.200H0zM7.300 1.300L16 0v7.600H7.300zM0 8.400h6.500v6.200L0 13.700zM7.300 8.400H16V16l-8.700-1.300z" /></svg>
        </button>
        <label className="flex w-[288px] items-center border border-[#5a5a5a] bg-[#343434] pl-3">
            <svg width="16" height="16" viewBox="0 0 16 16" fill="none" stroke="#e8e8e8" strokeWidth="1.300"><circle cx="10" cy="6" r="5.300" /><path d="M6.300 9.700L0 16" /></svg>
            <input aria-label="Search" placeholder="Type here to search" className="w-0 flex-1 bg-transparent pl-[11px] text-[14px] outline-none placeholder:text-[#dcdcdc]" />
            <Parrot />
        </label>
        <button aria-label="Task View" className="flex w-[51px] items-center justify-center">
            <svg width="16" height="16" viewBox="0 0 16 16" fill="none" stroke="#fff" strokeWidth="1.200"><path d="M.6 0v2.400h10V0M.6 5h10v6H.6zM.6 16v-2.400h10V16M14.500 0v3M14.500 9v7" /><path d="M13.500 4.500h2v3h-2z" fill="#fff" stroke="none" /></svg>
        </button>
        <div className="flex gap-px">
            {APPS.map(app => (
                <button key={app.name} aria-label={app.name} className={`flex w-12 flex-col items-center ${app.name === 'Word' ? 'bg-[#505050]' : ''}`}>
                    <span className="flex flex-1 items-center">{app.icon}</span>
                    <i className={`h-[2px] bg-[#76b9ed] ${app.running}`} />
                </button>
            ))}
        </div>
        <div className="flex flex-1 items-center justify-end">
            <button className="flex items-center text-[14px]">
                <svg width="24" height="24" viewBox="0 0 24 24">
                    <circle cx="11" cy="13" r="10" fill="#f28a1c" /><path d="M1 13a10 10 0 0 1 18-6L4 19a10 10 0 0 1-3-6z" fill="#f9a832" />
                    <circle cx="17" cy="6.500" r="6" fill="#c4261d" /><text x="15" y="10" fontSize="9" fontFamily="Roboto" fill="#fff">1</text>
                </svg>
                <span className="ml-[6px]">37°C</span>
                <span dir="rtl" className="ml-[9px] w-[44px] text-center font-['DejaVu_Sans',sans-serif] text-[13px]">مشمس</span>
            </button>
            <div className="ml-6 flex items-center gap-[10px]">
                <button aria-label="Hidden icons"><svg width="12" height="7" fill="none" stroke="#fff" strokeWidth="1.300"><path d="M.5 6.500l5.500-5.500 5.500 5.500" /></svg></button>
                <svg width="14" height="14" viewBox="0 0 14 14"><circle cx="7" cy="7" r="6.200" fill="none" stroke="#fff" strokeWidth="1.500" /><circle cx="7" cy="7" r="3" fill="#fff" /></svg>
                <svg width="12" height="16" viewBox="0 0 12 16" fill="none" stroke="#fff"><rect x="1.500" y="5" width="6.500" height="6.500" rx="1" /><path d="M8 7.500l3-2v5l-3-2M2 2.500c2-2 6-2 8 0M2 14c2 2 6 2 8 0" /></svg>
                <svg width="16" height="11" viewBox="0 0 16 11"><path d="M4 10.500a3.500 3.500 0 0 1-.5-7A4.500 4.500 0 0 1 12 4a3.200 3.200 0 0 1 .5 6.500z" fill="#e9e9e9" /></svg>
                <svg width="15" height="9" viewBox="0 0 15 9" fill="none" stroke="#fff"><path d="M.5.5h12v8H.5zM13 3h1.500v3H13" /><path d="M2 2h5v5H2z" fill="#fff" stroke="none" /></svg>
                <svg width="13" height="13" viewBox="0 0 13 13" fill="none" stroke="#ddd"><path d="M1 12A11 11 0 0 1 12.500 1.500M4 12.500a8 8 0 0 1 8.500-8M7 12.500a5 5 0 0 1 5.500-5" /><circle cx="11" cy="11" r="1.500" fill="#fff" stroke="none" /></svg>
                <svg width="16" height="13" viewBox="0 0 16 13" fill="none" stroke="#fff"><path d="M.5 4.500h2.500L6.500 1v11L3 8.500H.5zM8.500 4.500c1 1 1 3 0 4M10.500 2.500c2 2 2 6 0 8" /><path d="M13 1c3 3 3 8 0 11" stroke="#888" /></svg>
            </div>
            <button className="ml-[10px] w-6 text-[12px]">ENG</button>
            <button className="ml-2 w-[72px] text-center text-[12px] leading-[18px]">
                15:32<br />2025-05-16
            </button>
            <button aria-label="Notifications" className="ml-2 mr-[11px]">
                <svg width="25" height="25" viewBox="0 0 25 25">
                    <path d="M1 1h16v12H9l-4 4v-4H1z" fill="#fff" /><path d="M4 4.500h10M4 7h10M4 9.500h6" stroke="#262626" />
                    <circle cx="16.500" cy="16.500" r="7.800" fill="#333" stroke="#aaa" /><text x="13.500" y="21" fontSize="12" fontFamily="Roboto" fill="#fff">2</text>
                </svg>
            </button>
            <span className="mr-1 w-px self-stretch bg-[#6a6a6a]" />
        </div>
    </footer>
);

export default function App() {
    return (
        <div className="relative flex h-screen flex-col overflow-hidden font-['Open_Sans',sans-serif] text-[11px]">
            <TitleBar />
            <Tabs />
            <div className="flex h-[87px] shrink-0 border-b-2 border-[#8e9299] bg-gradient-to-b from-white via-[#fbfcfd] to-[#e5e9ee]">
                <Clipboard />
                <FontGroup />
                <ParagraphGroup />
                <StylesGroup />
                <EditingGroup />
                <div className="w-[10px]" />
            </div>
            <main className="flex min-h-0 flex-1 bg-gradient-to-b from-[#cdd1d6] to-[#b8bbc0]">
                <VerticalRuler />
                <div className="flex min-w-0 flex-1 flex-col items-center pr-[2px]">
                    <HorizontalRuler />
                    <div className="flex min-h-0 flex-1">
                        <i className="w-[11px] bg-gradient-to-r from-transparent to-[#8f9398]" />
                        <div className="flex flex-col"><Page /></div>
                        <i className="w-[11px] bg-gradient-to-l from-transparent to-[#8f9398]" />
                    </div>
                </div>
                <ScrollBar />
            </main>
            <StatusBar />
            <TaskBar />
            <div className="pointer-events-none absolute inset-x-0 bottom-4 flex flex-col items-center text-[#a4a8aa]/40">
                <span dir="rtl" className="font-['DejaVu_Sans',sans-serif] text-[46px] leading-[38px] font-bold">مستقل</span>
                <span className="font-['Inter',sans-serif] text-[27px] leading-7 font-semibold">mostaql.com</span>
            </div>
        </div>
    );
}
